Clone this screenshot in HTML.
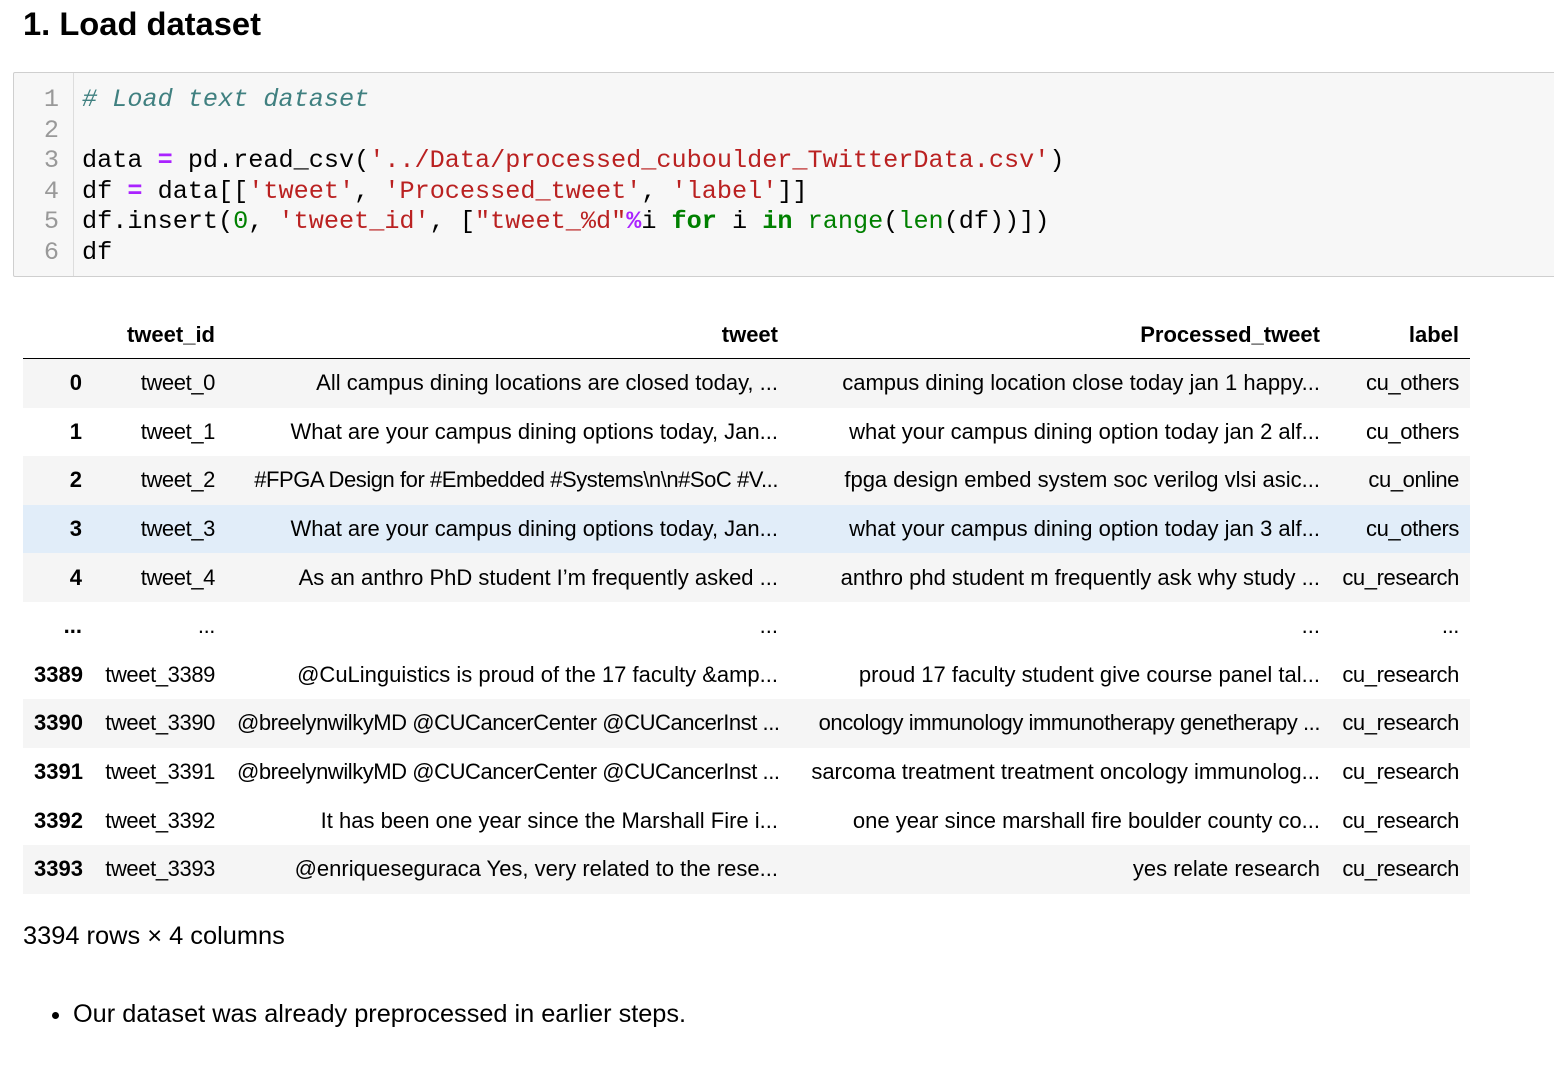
<!DOCTYPE html>
<html><head><meta charset="utf-8"><style>
body{margin:0;background:#fff;font-family:"Liberation Sans",sans-serif;color:#000;width:1554px;height:1072px;overflow:hidden;position:relative}
h1{position:absolute;left:23px;top:5px;margin:0;font-size:32.7px;font-weight:bold}
.code{position:absolute;left:13px;top:72px;width:1560px;height:203px;background:#f7f7f7;border:1px solid #cfcfcf;border-radius:2px}
.gut{position:absolute;left:0;top:0;width:59px;height:203px;border-right:1px solid #ddd;}
pre{margin:0;font-family:"Liberation Mono",monospace;font-size:25.2px;line-height:30.5px;position:absolute;top:12px}
.ln{left:0;width:45px;text-align:right;color:#999}
.src{left:68px}
.c{color:#408080;font-style:italic}.s{color:#ba2121}.o{color:#aa22ff;font-weight:bold}.n{color:#008000}.k{color:#008000;font-weight:bold}
table{position:absolute;left:23px;top:311px;border-collapse:collapse;font-size:22px;table-layout:fixed;width:1447px}
th,td{text-align:right;padding:0 11px;height:48.6px;white-space:nowrap;overflow:visible}
thead th{height:47px;vertical-align:middle;border-bottom:1.5px solid #000}
tbody tr:nth-child(odd){background:#f5f5f5}
tbody tr.h{background:#e1edf9}
tbody th{font-weight:bold}
.t{letter-spacing:-0.45px}
tbody td:nth-child(2),tbody td:nth-child(5){letter-spacing:-0.4px}
.foot{position:absolute;left:23px;top:922px;font-size:25.4px}
ul{position:absolute;left:28px;top:1000px;margin:0;padding-left:45px;font-size:25.3px}
</style></head><body>
<h1>1. Load dataset</h1>
<div class="code"><div class="gut"></div>
<pre class="ln">1
2
3
4
5
6</pre>
<pre class="src"><span class="c"># Load text dataset</span>

data <span class="o">=</span> pd.read_csv(<span class="s">'../Data/processed_cuboulder_TwitterData.csv'</span>)
df <span class="o">=</span> data[[<span class="s">'tweet'</span>, <span class="s">'Processed_tweet'</span>, <span class="s">'label'</span>]]
df.insert(<span class="n">0</span>, <span class="s">'tweet_id'</span>, [<span class="s">"tweet_%d"</span><span class="o">%</span>i <span class="k">for</span> i <span class="k">in</span> <span class="n">range</span>(<span class="n">len</span>(df))])
df</pre></div>
<table>
<colgroup><col style="width:70px"><col style="width:133px"><col style="width:563px"><col style="width:542px"><col style="width:139px"></colgroup>
<thead><tr><th></th><th>tweet_id</th><th>tweet</th><th>Processed_tweet</th><th>label</th></tr></thead>
<tbody>
<tr><th>0</th><td>tweet_0</td><td>All campus dining locations are closed today, ...</td><td>campus dining location close today jan 1 happy...</td><td>cu_others</td></tr>
<tr><th>1</th><td>tweet_1</td><td>What are your campus dining options today, Jan...</td><td>what your campus dining option today jan 2 alf...</td><td>cu_others</td></tr>
<tr><th>2</th><td>tweet_2</td><td class="t">#FPGA Design for #Embedded #Systems\n\n#SoC #V...</td><td>fpga design embed system soc verilog vlsi asic...</td><td>cu_online</td></tr>
<tr class="h"><th>3</th><td>tweet_3</td><td>What are your campus dining options today, Jan...</td><td>what your campus dining option today jan 3 alf...</td><td>cu_others</td></tr>
<tr><th>4</th><td>tweet_4</td><td>As an anthro PhD student I’m frequently asked ...</td><td>anthro phd student m frequently ask why study ...</td><td>cu_research</td></tr>
<tr style="background:#fff"><th>...</th><td>...</td><td>...</td><td>...</td><td>...</td></tr>
<tr style="background:#fff"><th>3389</th><td>tweet_3389</td><td>@CuLinguistics is proud of the 17 faculty &amp;amp...</td><td>proud 17 faculty student give course panel tal...</td><td>cu_research</td></tr>
<tr style="background:#f5f5f5"><th>3390</th><td>tweet_3390</td><td class="t">@breelynwilkyMD @CUCancerCenter @CUCancerInst ...</td><td class="t">oncology immunology immunotherapy genetherapy ...</td><td>cu_research</td></tr>
<tr style="background:#fff"><th>3391</th><td>tweet_3391</td><td class="t">@breelynwilkyMD @CUCancerCenter @CUCancerInst ...</td><td>sarcoma treatment treatment oncology immunolog...</td><td>cu_research</td></tr>
<tr style="background:#fff"><th>3392</th><td>tweet_3392</td><td>It has been one year since the Marshall Fire i...</td><td>one year since marshall fire boulder county co...</td><td>cu_research</td></tr>
<tr style="background:#f5f5f5"><th>3393</th><td>tweet_3393</td><td>@enriqueseguraca Yes, very related to the rese...</td><td>yes relate research</td><td>cu_research</td></tr>
</tbody></table>
<div class="foot">3394 rows × 4 columns</div>
<ul><li>Our dataset was already preprocessed in earlier steps.</li></ul>
</body></html>
